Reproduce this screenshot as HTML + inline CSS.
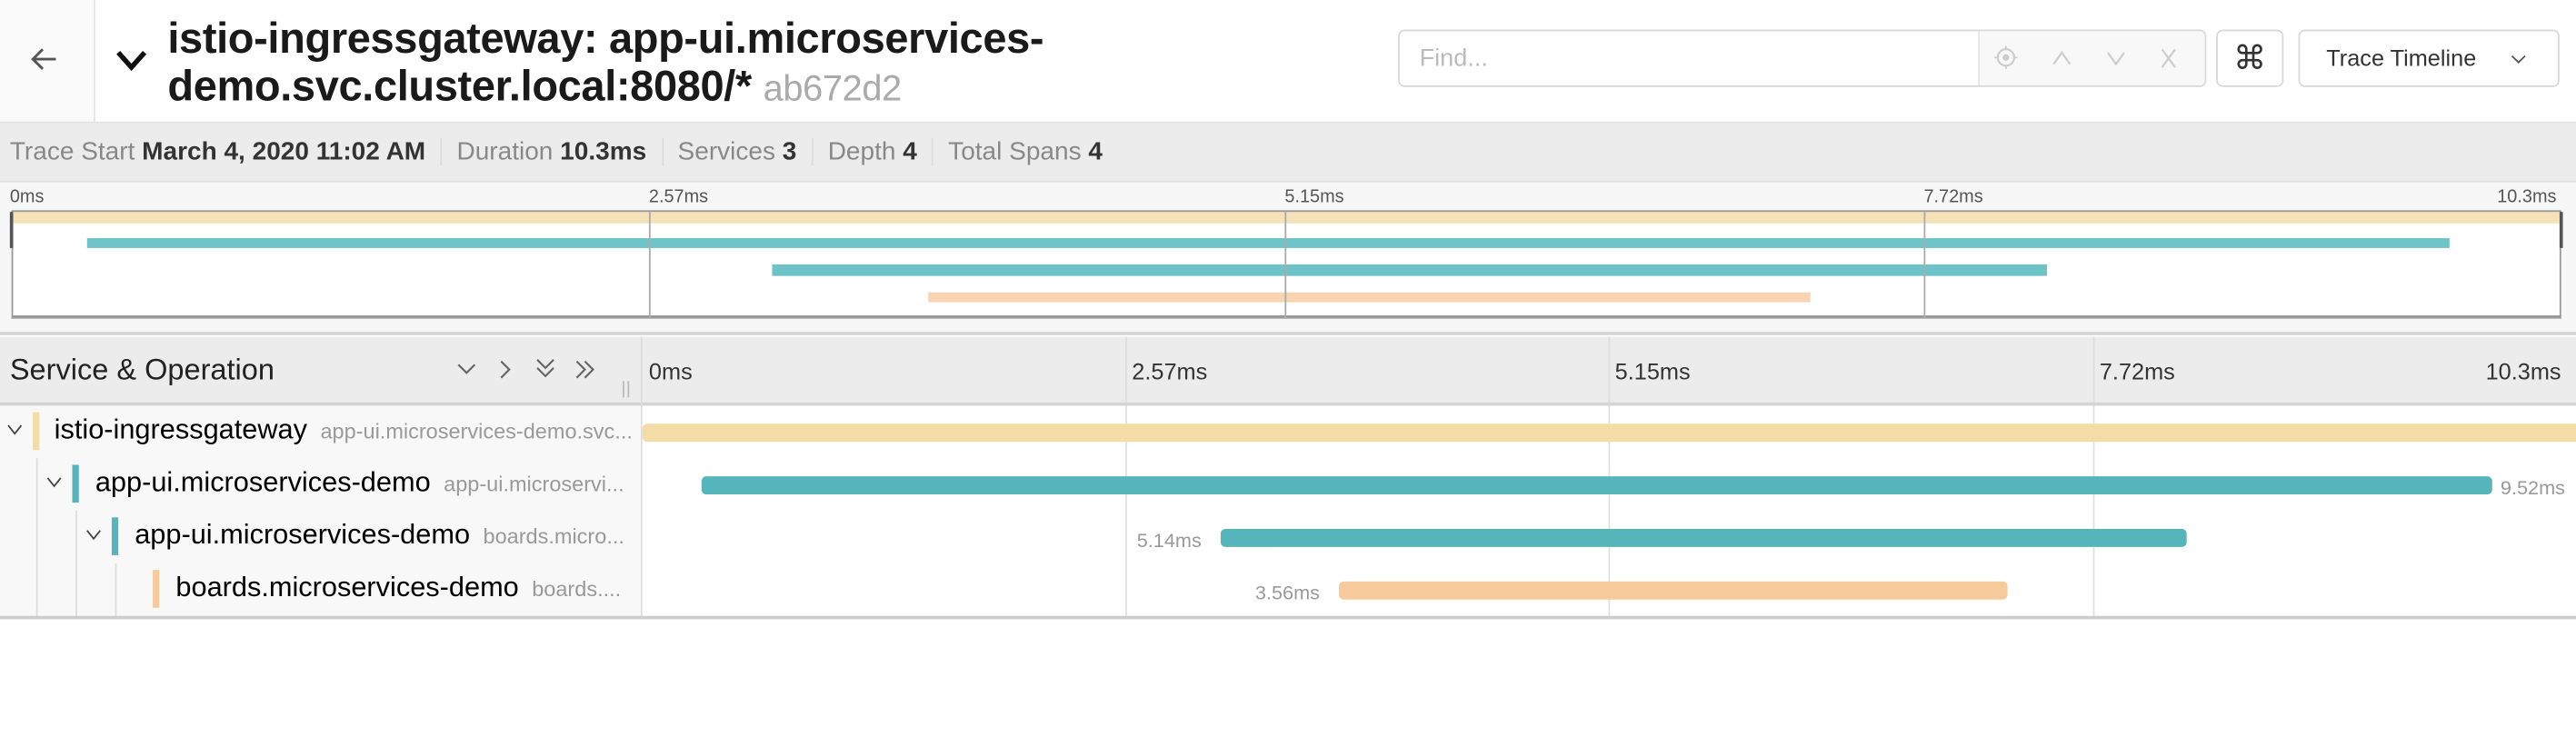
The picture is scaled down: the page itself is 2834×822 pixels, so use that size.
<!DOCTYPE html>
<html><head><meta charset="utf-8"><style>
*{box-sizing:border-box;margin:0;padding:0}
html,body{width:2834px;height:822px;overflow:hidden;background:#fff}
#w{position:absolute;left:0;top:0;width:1568px;height:455px;transform:scale(1.80740);transform-origin:0 0;font-family:"Liberation Sans",Arial,sans-serif;color:#000}
.a{position:absolute}
.sep{display:inline-block;width:1px;height:17px;background:#ddd;vertical-align:middle;margin:0 9px}
.tick{position:absolute;font-size:11px;color:#555;top:114px}
.vl{position:absolute;width:1px;background:#aaa;top:129px;height:65px}
.mb{position:absolute;height:6.5px}
.th{position:absolute;top:218px;font-size:14px;color:#333}
.gl{position:absolute;width:1px;background:#e0e0e0;top:247px;height:128px}
.bar{position:absolute;height:11px;border-radius:3px}
.lab{position:absolute;font-size:12px;color:#999}
.nm{position:absolute;font-size:17px;top:7px;white-space:nowrap;overflow:hidden}
.nm span{font-size:13px;color:#999;margin-left:8px}
.cb{position:absolute;width:3.5px;height:23px;top:5px}
</style></head><body><div id="w">
<div class="a" style="left:0;top:0;width:58px;height:75px;background:#fafafa;border-right:1px solid #e6e6e6"></div>
<svg class="a" style="left:17px;top:26px" width="20" height="20" viewBox="0 0 20 20"><path d="M17 10H3M9 4L3 10L9 16" fill="none" stroke="#555" stroke-width="1.6"/></svg>
<svg class="a" style="left:70px;top:30px" width="20" height="14" viewBox="0 0 20 14"><path d="M2 2L10 11L18 2" fill="none" stroke="#111" stroke-width="3"/></svg>
<div class="a" style="left:102px;top:9px;font-size:26px;line-height:29px;font-weight:bold;color:#1a1a1a;letter-spacing:-0.2px">istio-ingressgateway: app-ui.microservices-<br>demo.svc.cluster.local:8080/* <span style="color:#aaa;font-weight:normal;font-size:22px">ab672d2</span></div>
<div class="a" style="left:851px;top:18px;width:492px;height:35px;border:1px solid #d9d9d9;border-radius:4px;background:#fff"></div>
<div class="a" style="left:1204px;top:19px;width:138px;height:33px;background:#f8f8f8;border-left:1px solid #e4e4e4;border-radius:0 3px 3px 0"></div>
<div class="a" style="left:864px;top:27px;font-size:15px;color:#bbb">Find...</div>
<svg class="a" style="left:1212px;top:27px" width="120" height="18" viewBox="0 0 120 18"><circle cx="9" cy="8" r="5" fill="none" stroke="#ccc" stroke-width="1.2"/><circle cx="9" cy="8" r="2" fill="#ccc"/><path d="M9 1v2M9 13v2M2 8h2M14 8h2" stroke="#ccc"/><path d="M38 12l5-7l5 7" fill="none" stroke="#ccc" stroke-width="1.2"/><path d="M71 5l5 7l5-7" fill="none" stroke="#ccc" stroke-width="1.2"/><path d="M104 3l8 11M112 3l-8 11" stroke="#ccc" stroke-width="1.2"/></svg>
<div class="a" style="left:1349px;top:18px;width:41px;height:35px;border:1px solid #d9d9d9;border-radius:4px;text-align:center;font-size:20px;line-height:32px;color:#333;font-family:'DejaVu Sans',sans-serif">⌘</div>
<div class="a" style="left:1399px;top:18px;width:159px;height:35px;border:1px solid #d9d9d9;border-radius:4px;font-size:14px;line-height:33px;color:#333;padding-left:16px">Trace Timeline</div>
<svg class="a" style="left:1528px;top:32px" width="10" height="8" viewBox="0 0 10 8"><path d="M1 2l4 4l4-4" fill="none" stroke="#555" stroke-width="1"/></svg>
<div class="a" style="left:0;top:74px;width:1568px;height:1px;background:#e4e4e4"></div>
<div class="a" style="left:0;top:75px;width:1568px;height:35px;background:#ececec"></div>
<div class="a" style="left:6px;top:84px;font-size:15.5px;color:#888;white-space:nowrap">Trace Start <b style="color:#333">March 4, 2020 11:02 AM</b><span class="sep"></span>Duration <b style="color:#333">10.3ms</b><span class="sep"></span>Services <b style="color:#333">3</b><span class="sep"></span>Depth <b style="color:#333">4</b><span class="sep"></span>Total Spans <b style="color:#333">4</b></div>
<div class="a" style="left:0;top:110px;width:1568px;height:94px;background:#f7f7f7;border-top:1px solid #e0e0e0;border-bottom:2px solid #d4d4d4"></div>
<div class="tick" style="left:6px">0ms</div><div class="tick" style="left:395px">2.57ms</div><div class="tick" style="left:782px">5.15ms</div><div class="tick" style="left:1171px">7.72ms</div><div class="tick" style="left:1520px">10.3ms</div>
<div class="a" style="left:7px;top:129px;width:1552px;height:65px;background:#fff;border-left:1px solid #999;border-right:1px solid #999;border-bottom:2px solid #999"></div>
<div class="a" style="left:7px;top:128px;width:1552px;height:1.5px;background:#999"></div>
<div class="mb" style="left:8px;top:129px;width:1550px;background:#f5e2b8"></div>
<div class="mb" style="left:53px;top:144.5px;width:1438px;background:#6ec3c8"></div>
<div class="mb" style="left:470px;top:161px;width:776px;background:#6ec3c8"></div>
<div class="mb" style="left:565px;top:177.5px;width:537px;background:#f8d5b0"></div>
<div class="vl" style="left:395px"></div><div class="vl" style="left:782px"></div><div class="vl" style="left:1171px"></div>
<div class="a" style="left:6px;top:129px;width:2px;height:22px;background:#555"></div>
<div class="a" style="left:1558px;top:129px;width:2px;height:22px;background:#555"></div>
<div class="a" style="left:0;top:205px;width:1568px;height:42px;background:#ececec;border-bottom:2px solid #d4d4d4"></div>
<div class="a" style="left:6px;top:215px;font-size:18px;color:#222">Service &amp; Operation</div>
<svg class="a" style="left:277px;top:217px" width="90" height="16" viewBox="0 0 90 16"><g fill="none" stroke="#666" stroke-width="1.2"><path d="M2 5l5 5l5-5"/><path d="M28 3l5 5l-5 5"/><path d="M50 2l5 5l5-5M50 7l5 5l5-5"/><path d="M74 3l5 5l-5 5M79 3l5 5l-5 5"/></g></svg>
<div class="a" style="left:379px;top:232px;width:1px;height:10px;background:#bbb"></div><div class="a" style="left:382px;top:232px;width:1px;height:10px;background:#bbb"></div>
<div class="a" style="left:390px;top:205px;width:1px;height:170px;background:#ddd"></div>
<div class="th" style="left:395px">0ms</div><div class="th" style="left:689px">2.57ms</div><div class="th" style="left:983px">5.15ms</div><div class="th" style="left:1278px">7.72ms</div><div class="th" style="left:1513px">10.3ms</div>
<div class="a" style="left:685px;top:205px;width:1px;height:40px;background:#ddd"></div><div class="a" style="left:979px;top:205px;width:1px;height:40px;background:#ddd"></div><div class="a" style="left:1274px;top:205px;width:1px;height:40px;background:#ddd"></div>
<div class="a" style="left:0;top:247px;width:390px;height:128px;background:#f8f8f8"></div>
<div class="gl" style="left:685px"></div><div class="gl" style="left:979px"></div><div class="gl" style="left:1274px"></div>
<div class="a" style="left:22px;top:279px;width:1px;height:96px;background:#ddd"></div>
<div class="a" style="left:46px;top:311px;width:1px;height:64px;background:#ddd"></div>
<div class="a" style="left:70px;top:343px;width:1px;height:32px;background:#ddd"></div>
<svg class="a" style="left:4px;top:258px" width="10" height="8"><path d="M1 1l4 5l4-5" fill="none" stroke="#444" stroke-width="1"/></svg>
<div class="cb" style="left:20px;top:251px;background:#f3dca6"></div>
<div class="nm" style="left:33px;top:252px;width:352px">istio-ingressgateway<span>app-ui.microservices-demo.svc...</span></div>
<svg class="a" style="left:28px;top:290px" width="10" height="8"><path d="M1 1l4 5l4-5" fill="none" stroke="#444" stroke-width="1"/></svg>
<div class="cb" style="left:44px;top:283px;background:#56b5bb"></div>
<div class="nm" style="left:58px;top:284px;width:327px">app-ui.microservices-demo<span>app-ui.microservi...</span></div>
<svg class="a" style="left:52px;top:322px" width="10" height="8"><path d="M1 1l4 5l4-5" fill="none" stroke="#444" stroke-width="1"/></svg>
<div class="cb" style="left:68px;top:315px;background:#56b5bb"></div>
<div class="nm" style="left:82px;top:316px;width:303px">app-ui.microservices-demo<span>boards.micro...</span></div>
<div class="cb" style="left:93px;top:347px;background:#f7ca9b"></div>
<div class="nm" style="left:107px;top:348px;width:278px">boards.microservices-demo<span>boards....</span></div>
<div class="bar" style="left:391px;top:258px;width:1177px;background:#f3dca6;border-radius:3px 0 0 3px"></div>
<div class="bar" style="left:427px;top:290px;width:1090px;background:#56b5bb"></div>
<div class="lab" style="left:1522px;top:290px">9.52ms</div>
<div class="bar" style="left:743px;top:322px;width:588px;background:#56b5bb"></div>
<div class="lab" style="left:692px;top:322px">5.14ms</div>
<div class="bar" style="left:815px;top:354px;width:407px;background:#f7ca9b"></div>
<div class="lab" style="left:764px;top:354px">3.56ms</div>
<div class="a" style="left:0;top:375px;width:1568px;height:1.5px;background:#ccc"></div>
</div></body></html>
